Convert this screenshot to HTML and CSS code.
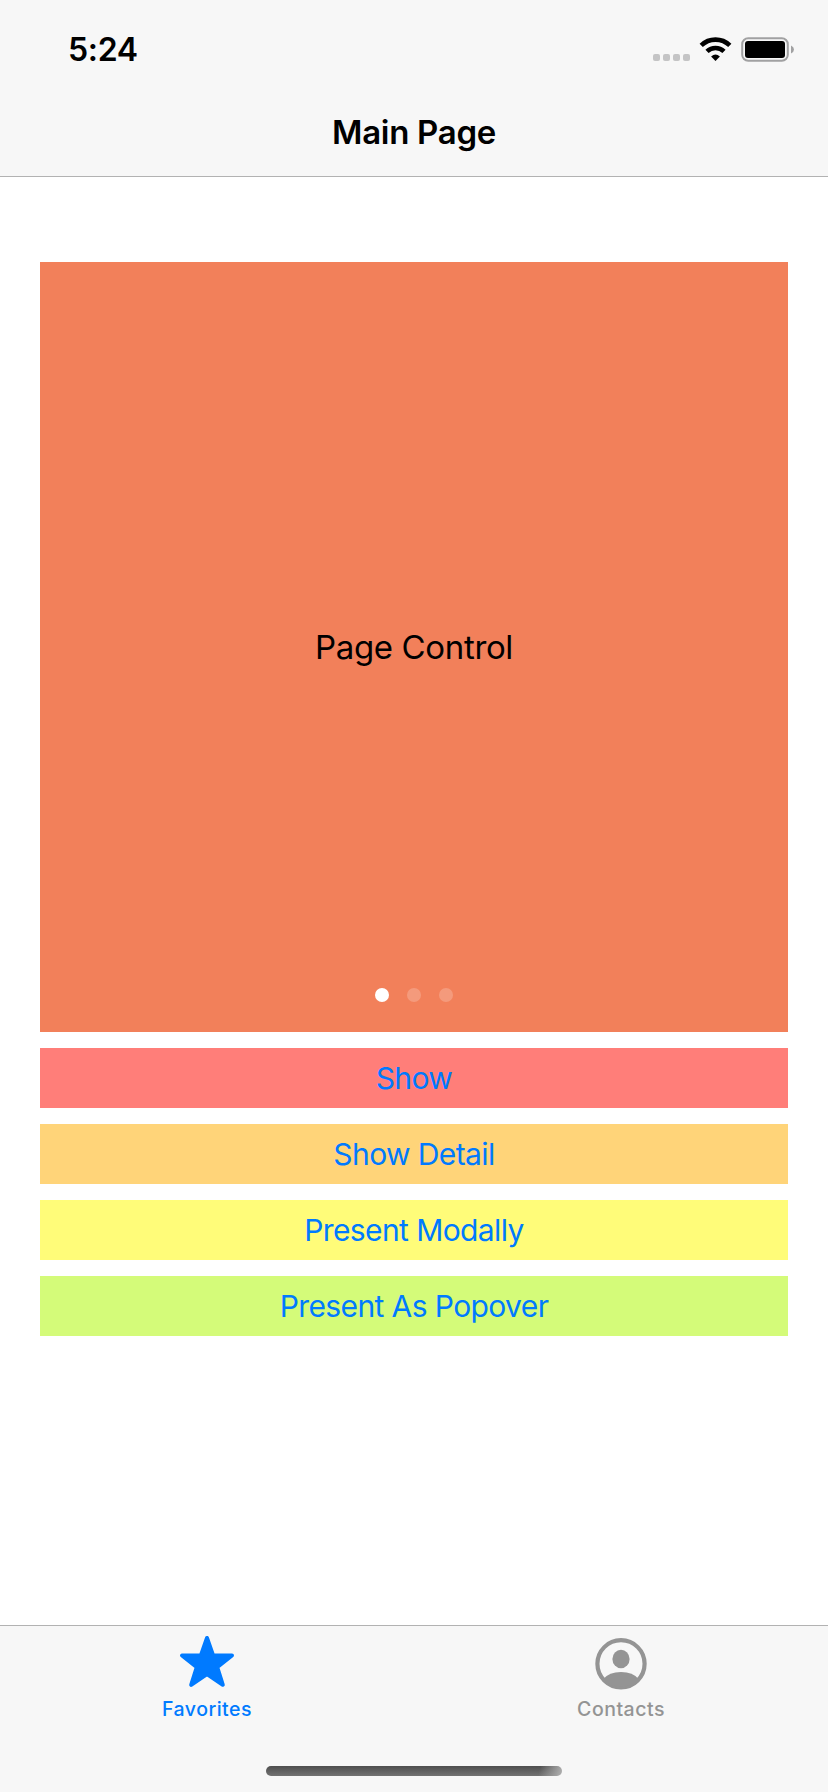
FILE: index.html
```html
<!DOCTYPE html>
<html lang="en">
<head>
<meta charset="utf-8">
<title>Main Page</title>
<link rel="stylesheet" href="styles.css">
</head>
<body>
<div class="screen">
  <header class="header">
    <div class="status-bar">
      <span class="time">5:24</span>
      <svg class="status-icons" width="146" height="30" viewBox="0 0 146 30" aria-hidden="true">
        <g fill="#c4c4c5">
          <rect x="3" y="19" width="7" height="7" rx="2"/>
          <rect x="13" y="19" width="7" height="7" rx="2"/>
          <rect x="23" y="19" width="7" height="7" rx="2"/>
          <rect x="33" y="19" width="7" height="7" rx="2"/>
        </g>
        <g fill="none" stroke="#000" stroke-width="4.600">
          <path d="M51.200 10.400 A20.500 20.500 0 0 1 79.800 10.400"/>
          <path d="M57 16.400 A12.300 12.300 0 0 1 74 16.400"/>
        </g>
        <path d="M65.500 26 L61.100 21.600 Q65.500 17.600 69.900 21.600 Z"/>
        <rect x="92.200" y="3.200" width="45.600" height="22.600" rx="6" fill="none" stroke="#a1a1a2" stroke-width="2"/>
        <rect x="95" y="6" width="40" height="17" rx="3"/>
        <path d="M141 10.600 Q144 12 144 14.500 Q144 17 141 18.400 Z" fill="#a1a1a2"/>
      </svg>
    </div>
    <h1 class="title">Main Page</h1>
  </header>
  <main class="content">
    <section class="pager">
      <p class="pager-label">Page Control</p>
      <div class="dots"><i class="dot active"></i><i class="dot"></i><i class="dot"></i></div>
    </section>
    <button class="action show">Show</button>
    <button class="action detail">Show Detail</button>
    <button class="action modal">Present Modally</button>
    <button class="action popover">Present As Popover</button>
  </main>
  <footer class="footer">
    <nav class="tabs">
      <a class="tab selected">
        <svg width="60" height="64" viewBox="0 0 60 64" aria-hidden="true">
          <path d="M30 12 L36.100 29.300 L55 29.400 L40.200 41.100 L45.800 58.800 L30 48.100 L14.200 58.800 L19.800 41.100 L5 29.400 L23.900 29.300 Z" fill="currentColor" stroke="currentColor" stroke-width="4" stroke-linejoin="round"/>
        </svg>
        <span class="tab-label">Favorites</span>
      </a>
      <a class="tab">
        <svg width="60" height="64" viewBox="0 0 60 64" aria-hidden="true">
          <circle cx="30" cy="37.800" r="23.600" fill="none" stroke="currentColor" stroke-width="4.200"/>
          <ellipse cx="30" cy="33" rx="8.600" ry="9.200" fill="currentColor"/>
          <path d="M12.500 53 Q18 46 30 46 Q42 46 47.500 53 Q41 61 30 61 Q19 61 12.500 53 Z" fill="currentColor"/>
        </svg>
        <span class="tab-label">Contacts</span>
      </a>
    </nav>
    <div class="home-indicator"></div>
  </footer>
</div>
</body>
</html>
```
FILE: styles.css
```css
* { box-sizing: border-box; margin: 0; padding: 0; }
body { background: #fff; font-family: Inter, "Liberation Sans", sans-serif; }
.screen { width: 828px; height: 1792px; display: flex; flex-direction: column; }
.header { height: 177px; background: #f7f7f7; border-bottom: 1px solid #b2b2b2; }
.status-bar { height: 88px; display: flex; justify-content: space-between; padding: 30px 32px 0 68px; }
.time { font-size: 32px; line-height: 40px; font-weight: 600; letter-spacing: -0.3px; }
.status-icons { margin-top: 5px; }
.title { height: 88px; line-height: 88px; text-align: center; font-size: 33px; font-weight: 600; letter-spacing: -0.3px; }
.content { flex: 1; padding: 85px 40px 0; display: flex; flex-direction: column; gap: 16px; }
.pager { height: 770px; background: #f2805a; display: flex; flex-direction: column; align-items: center; justify-content: space-between; padding: 364px 0 30px; }
.pager-label { font-size: 33px; line-height: 42px; letter-spacing: -0.350px; }
.dots { display: flex; gap: 18px; }
.dot { width: 14px; height: 14px; border-radius: 50%; background: #f49a7c; }
.dot.active { background: #fff; }
.action { height: 60px; border: 0; font: 400 30px/60px Inter, "Liberation Sans", sans-serif; letter-spacing: -0.6px; color: #007aff; text-align: center; }
.show { background: #ff7e79; }
.detail { background: #ffd479; }
.modal { background: #fffc79; }
.popover { background: #d4fb79; }
.footer { height: 167px; background: #f7f7f7; border-top: 1px solid #b2b2b2; display: flex; flex-direction: column; align-items: center; }
.tabs { width: 100%; height: 140px; display: grid; grid-template-columns: 1fr 1fr; }
.tab { display: flex; flex-direction: column; align-items: center; color: #949494; }
.tab svg { flex: none; }
.selected { color: #007aff; }
.tab-label { margin-top: 6px; font-size: 19.500px; line-height: 26px; font-weight: 450; letter-spacing: 0.500px; }
.home-indicator { width: 296px; height: 10px; border-radius: 5px; background: linear-gradient(100deg, transparent 92%, #b0b0b0 100%), linear-gradient(#4e4e4e, #727272); }
```
